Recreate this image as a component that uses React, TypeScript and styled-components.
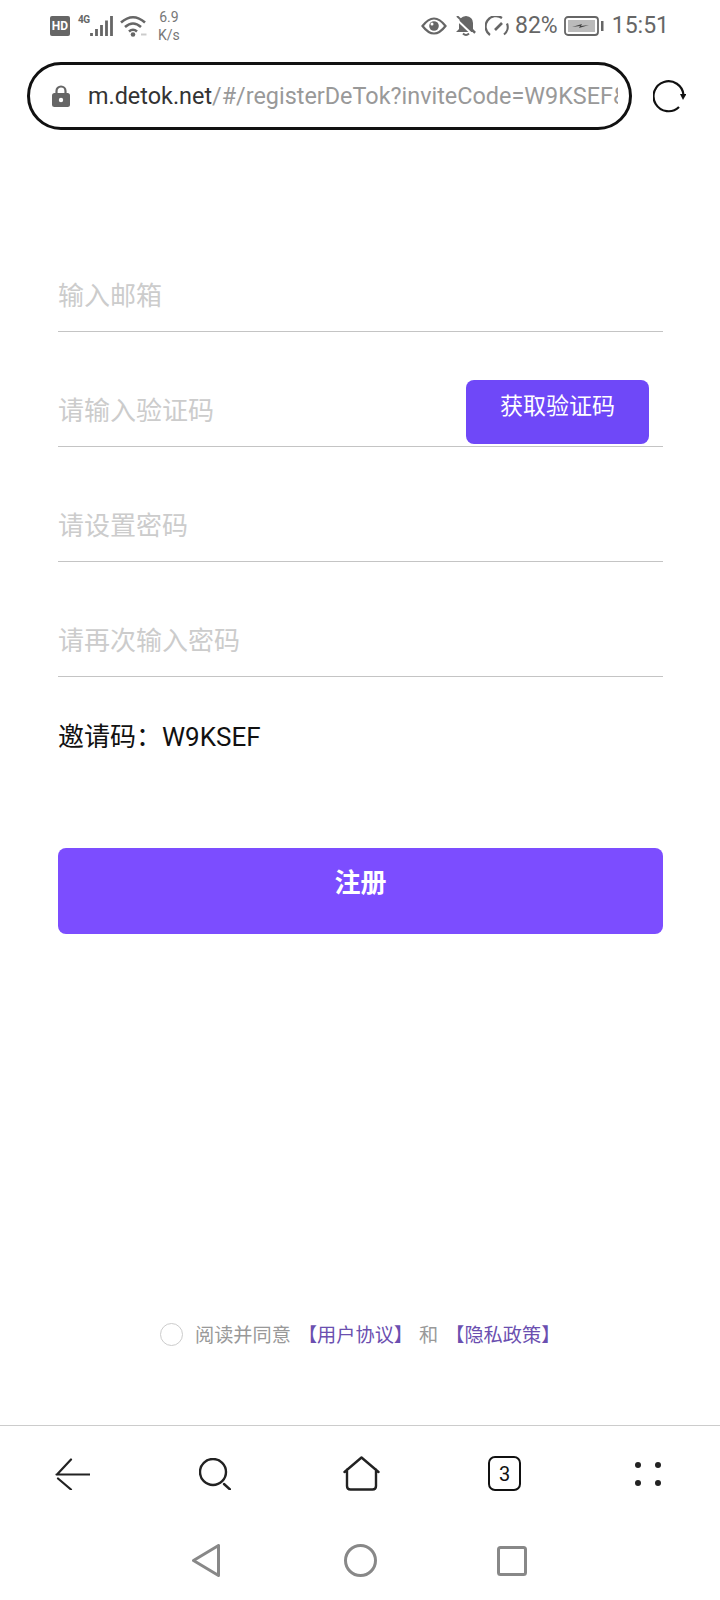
import React from 'react';
import styled, { createGlobalStyle } from 'styled-components';

const FONT = 'Roboto, "Noto Sans CJK SC", sans-serif';
const PURPLE = '#7c4dff';

const GlobalStyle = createGlobalStyle`
  html, body { margin: 0; padding: 0; background: #fff; }
  * { box-sizing: border-box; }
`;

const Page = styled.div`
  width: 720px;
  height: 1600px;
  display: flex;
  flex-direction: column;
  background: #fff;
  font-family: ${FONT};
  overflow: hidden;
`;

const StatusBar = styled.div`
  height: 50px;
  padding: 1px 51px 0 50px;
  display: flex;
  justify-content: space-between;
  align-items: center;
  color: #666;
`;

const StatusGroup = styled.div`
  display: flex;
  align-items: center;
`;

const Slot = styled.div<{ $left: number }>`
  margin-left: ${(p) => p.$left}px;
  display: flex;
  align-items: center;
`;

const HdBadge = styled.div`
  width: 20px;
  height: 20px;
  border-radius: 2px;
  background: #666;
  color: #fff;
  font-size: 12px;
  font-weight: 700;
  line-height: 20px;
  text-align: center;
`;

const NetType = styled.div`
  width: 12px;
  height: 22px;
  font-size: 10px;
  line-height: 10px;
  font-weight: 700;
  color: #666;
  white-space: nowrap;
  letter-spacing: -0.5px;
`;

const NetSpeed = styled.div`
  font-size: 14px;
  line-height: 18px;
  text-align: center;
  color: #777;
`;

const StatusText = styled.span`
  font-size: 23px;
  color: #666;
`;

const UrlRow = styled.div`
  margin-top: 12px;
  padding-left: 27px;
  display: flex;
  align-items: center;
`;

const UrlBox = styled.div`
  width: 605px;
  height: 68px;
  border: 3px solid #111;
  border-radius: 34px;
  padding: 0 11px 0 22px;
  display: flex;
  align-items: center;
  overflow: hidden;
`;

const UrlText = styled.div`
  margin-left: 18px;
  font-size: 23.400px;
  white-space: nowrap;
  overflow: hidden;
  color: #999;
`;

const UrlHost = styled.span`
  color: #333;
`;

const ReloadButton = styled.div`
  margin-left: 21px;
  display: flex;
`;

const Form = styled.div`
  margin-top: 87px;
  padding: 0 57px 0 58px;
  flex: 1;
  display: flex;
  flex-direction: column;
`;

const Field = styled.div`
  position: relative;
  height: 115px;
  border-bottom: 1px solid #c4c4c4;
  display: flex;
  align-items: flex-end;
  padding-bottom: 20px;
`;

const FieldInput = styled.input`
  flex: 1;
  border: 0;
  outline: 0;
  padding: 0;
  height: 30px;
  line-height: 30px;
  font-size: 26px;
  font-family: ${FONT};
  &::placeholder { color: #ccc; opacity: 1; }
`;

const CodeButton = styled.div`
  position: absolute;
  right: 14px;
  top: 48px;
  width: 183px;
  height: 64px;
  border-radius: 8px;
  background: #6f48f8;
  color: #fff;
  font-size: 23px;
  text-align: center;
  padding-top: 12px;
  line-height: 30px;
`;

const InviteRow = styled.div`
  margin-top: 43px;
  font-size: 26px;
  line-height: 34px;
  color: #111;
`;

const SubmitButton = styled.div`
  margin-top: 94px;
  height: 86px;
  border-radius: 8px;
  background: ${PURPLE};
  color: #fff;
  font-size: 26px;
  font-weight: 700;
  text-align: center;
  padding-top: 18px;
  line-height: 34px;
`;

const Agreement = styled.div`
  height: 102px;
  padding-left: 160px;
  display: flex;
  align-items: flex-start;
  font-size: 19.200px;
  line-height: 26px;
  color: #999;
  white-space: nowrap;
`;

const Radio = styled.div`
  width: 23px;
  height: 23px;
  border: 1px solid #ccc;
  border-radius: 50%;
  margin-right: 12px;
`;

const AgreeLink = styled.span`
  color: #6b4fb0;
  margin-left: 7px;
`;

const AgreeAnd = styled.span`
  margin-left: 6px;
`;

const BrowserNav = styled.div`
  border-top: 1px solid #ccc;
  height: 96px;
  padding-left: 55px;
  display: grid;
  grid-template-columns: 144px 144px 145px 147px 26px;
  align-items: center;
`;

const SystemNav = styled.div`
  height: 79px;
  padding-left: 192px;
  display: grid;
  grid-template-columns: 152px 153px 30px;
  align-items: center;
`;

const TabCount = styled.div`
  width: 33px;
  height: 35px;
  border: 2.500px solid #111;
  border-radius: 7px;
  font-size: 20px;
  display: flex;
  align-items: center;
  justify-content: center;
  color: #111;
`;

const SvgBox = styled.svg`
  display: block;
  flex-shrink: 0;
`;

function Glyph({ w, h, children }: { w: number; h: number; children: React.ReactNode }) {
  return (
    <SvgBox width={w} height={h} viewBox={`0 0 ${w} ${h}`} fill="none">
      {children}
    </SvgBox>
  );
}

function SignalBars() {
  return (
    <Glyph w={23} h={22}>
      <path d="M1.500 18v3M6.500 14v7M11.500 10v11M16.500 5.500v15.500M21.500 1v20" stroke="#666" strokeWidth="2.800" />
    </Glyph>
  );
}

function WifiIcon() {
  return (
    <Glyph w={27} h={22}>
      <path d="M1 7.500q12-10.500 24 0M5 12q8-7 16 0M9 16.500q4-3.500 8 0" stroke="#666" strokeWidth="2.600" />
      <circle cx="13" cy="19.500" r="2.300" fill="#666" />
      <path d="M21 19.500h5.500" stroke="#ccc" strokeWidth="2" />
    </Glyph>
  );
}

function EyeIcon() {
  return (
    <Glyph w={26} h={18}>
      <path d="M1.500 9Q13-6 24.500 9 13 24 1.500 9z" stroke="#666" strokeWidth="2.200" />
      <circle cx="13" cy="9" r="4.800" fill="#666" />
      <circle cx="11" cy="7" r="1.500" fill="#fff" />
    </Glyph>
  );
}

function BellOffIcon() {
  return (
    <Glyph w={20} h={20}>
      <path d="M10 0q-7 1-7 7v6l-3 3h20l-3-3V7q0-6-7-7z" fill="#666" />
      <path d="M7 17.500q3 3 6 0" stroke="#666" strokeWidth="2" />
      <path d="M-1 2l18 17" stroke="#fff" strokeWidth="2" />
      <path d="M1 0l18 17" stroke="#666" strokeWidth="2" />
    </Glyph>
  );
}

function SpeedIcon() {
  return (
    <Glyph w={24} h={20}>
      <path d="M5 19A9.500 9.500 0 0 1 17 2" stroke="#666" strokeWidth="2.200" />
      <path d="M22 7.500A9.500 9.500 0 0 1 19 18.500" stroke="#666" strokeWidth="2.200" />
      <path d="M10 14l7-7" stroke="#666" strokeWidth="2.600" />
    </Glyph>
  );
}

function BatteryIcon() {
  return (
    <Glyph w={40} h={20}>
      <rect x="1" y="1" width="33" height="18" rx="3" stroke="#666" strokeWidth="1.800" />
      <rect x="4" y="4" width="27" height="12" fill="#bbb" />
      <path d="M8 11l10-3-1 2 8-1-10 3 1-2z" fill="#444" />
      <rect x="37" y="5" width="2.500" height="10" fill="#666" />
    </Glyph>
  );
}

function LockIcon() {
  return (
    <Glyph w={18} h={22}>
      <path d="M4.500 9V6a4.500 4.500 0 0 1 9 0v3" stroke="#666" strokeWidth="2.200" />
      <rect y="8" width="18" height="14" rx="2.500" fill="#666" />
      <circle cx="9" cy="15" r="2.200" fill="#fff" />
    </Glyph>
  );
}

function ReloadIcon() {
  return (
    <Glyph w={33} h={34}>
      <path d="M26 28A15 15 0 1 1 30.500 16" stroke="#111" strokeWidth="2.200" />
      <path d="M27 15h6.500l-3.500 6z" fill="#111" />
    </Glyph>
  );
}

function BackIcon() {
  return (
    <Glyph w={35} h={32}>
      <path d="M1.500 16.500h33M16 1.500L2 16.500M3 20.500l13 11" stroke="#222" strokeWidth="2.200" strokeLinecap="round" />
    </Glyph>
  );
}

function SearchIcon() {
  return (
    <Glyph w={32} h={32}>
      <circle cx="14" cy="14" r="13" stroke="#222" strokeWidth="2.400" />
      <path d="M25 26l6 5.500" stroke="#222" strokeWidth="2.400" strokeLinecap="round" />
    </Glyph>
  );
}

function HomeIcon() {
  return (
    <Glyph w={37} h={35}>
      <path d="M1.500 16L18.500 1.500 35.500 16M4 13.500V30q0 3.500 3.500 3.500h22q3.500 0 3.500-3.500V13.500" stroke="#222" strokeWidth="2.400" strokeLinecap="round" strokeLinejoin="round" />
    </Glyph>
  );
}

function MoreIcon() {
  return (
    <Glyph w={26} h={24}>
      <circle cx="3" cy="3" r="3" fill="#222" />
      <circle cx="23" cy="3" r="3" fill="#222" />
      <circle cx="3" cy="21" r="3" fill="#222" />
      <circle cx="23" cy="21" r="3" fill="#222" />
    </Glyph>
  );
}

function NavBackIcon() {
  return (
    <Glyph w={28} h={33}>
      <path d="M1.500 16.500L26.500 1.500v30z" stroke="#888" strokeWidth="3" strokeLinejoin="round" />
    </Glyph>
  );
}

function NavHomeIcon() {
  return (
    <Glyph w={33} h={33}>
      <circle cx="16.500" cy="16.500" r="15" stroke="#888" strokeWidth="3" />
    </Glyph>
  );
}

function NavRecentIcon() {
  return (
    <Glyph w={30} h={30}>
      <rect x="1.500" y="1.500" width="27" height="27" rx="2" stroke="#888" strokeWidth="3" />
    </Glyph>
  );
}

export default function App() {
  return (
    <Page>
      <GlobalStyle />
      <StatusBar>
        <StatusGroup>
          <HdBadge>HD</HdBadge>
          <Slot $left={8}><NetType>4G</NetType></Slot>
          <SignalBars />
          <Slot $left={7}><WifiIcon /></Slot>
          <Slot $left={11}><NetSpeed>6.9<br />K/s</NetSpeed></Slot>
        </StatusGroup>
        <StatusGroup>
          <EyeIcon />
          <Slot $left={9}><BellOffIcon /></Slot>
          <Slot $left={9}><SpeedIcon /></Slot>
          <Slot $left={6}><StatusText>82%</StatusText></Slot>
          <Slot $left={6}><BatteryIcon /></Slot>
          <Slot $left={8}><StatusText>15:51</StatusText></Slot>
        </StatusGroup>
      </StatusBar>
      <UrlRow>
        <UrlBox>
          <LockIcon />
          <UrlText><UrlHost>m.detok.net</UrlHost>/#/registerDeTok?inviteCode=W9KSEF&amp;</UrlText>
        </UrlBox>
        <ReloadButton><ReloadIcon /></ReloadButton>
      </UrlRow>
      <Form>
        <Field><FieldInput placeholder="输入邮箱" /></Field>
        <Field>
          <FieldInput placeholder="请输入验证码" />
          <CodeButton>获取验证码</CodeButton>
        </Field>
        <Field><FieldInput placeholder="请设置密码" /></Field>
        <Field><FieldInput placeholder="请再次输入密码" /></Field>
        <InviteRow>邀请码：W9KSEF</InviteRow>
        <SubmitButton>注册</SubmitButton>
      </Form>
      <Agreement>
        <Radio />
        阅读并同意<AgreeLink>【用户协议】</AgreeLink>
        <AgreeAnd>和</AgreeAnd>
        <AgreeLink>【隐私政策】</AgreeLink>
      </Agreement>
      <BrowserNav>
        <BackIcon />
        <SearchIcon />
        <HomeIcon />
        <TabCount>3</TabCount>
        <MoreIcon />
      </BrowserNav>
      <SystemNav>
        <NavBackIcon />
        <NavHomeIcon />
        <NavRecentIcon />
      </SystemNav>
    </Page>
  );
}
